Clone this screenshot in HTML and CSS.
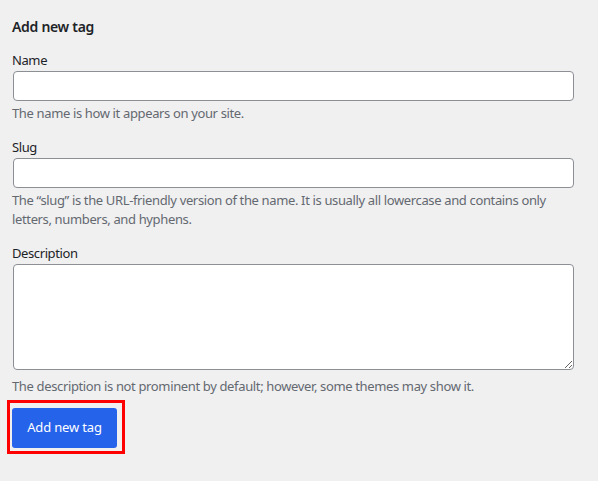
FILE: index.html
```html
<!DOCTYPE html>
<html lang="en">
<head>
<meta charset="utf-8">
<title>Add new tag</title>
<link rel="stylesheet" href="styles.css">
</head>
<body>
<div class="form-wrap">
  <h2 class="title">Add new tag</h2>
  <form class="tag-form">
    <div class="form-field">
      <label for="tag-name">Name</label>
      <input type="text" id="tag-name" class="text-input">
      <p class="description">The name is how it appears on your site.</p>
    </div>
    <div class="form-field">
      <label for="tag-slug">Slug</label>
      <input type="text" id="tag-slug" class="text-input">
      <p class="description">The “slug” is the URL-friendly version of the name. It is usually all lowercase and contains only letters, numbers, and hyphens.</p>
    </div>
    <div class="form-field">
      <label for="tag-description">Description</label>
      <textarea id="tag-description" class="text-area"></textarea>
      <p class="description">The description is not prominent by default; however, some themes may show it.</p>
    </div>
    <div class="submit">
      <button type="button" class="button-primary">Add new tag</button>
      <span class="highlight"></span>
    </div>
  </form>
</div>
</body>
</html>
```
FILE: styles.css
```css
html, body {
  margin: 0;
  padding: 0;
  background: #f0f0f1;
}
body {
  font-family: "Segoe UI", "Noto Sans", "Open Sans", sans-serif;
  font-size: 13px;
  line-height: 19.5px;
  color: #1d2327;
  width: 598px;
  height: 481px;
  overflow: hidden;
}
.form-wrap {
  padding: 16px 23px 0 12px;
}
.title {
  margin: 0 0 12px;
  font-size: 14px;
  font-weight: 600;
  line-height: 22px;
  letter-spacing: -0.3px;
}
.form-field {
  display: flex;
  flex-direction: column;
  align-items: stretch;
  margin-bottom: 13px;
}
.form-field label {
  display: block;
  line-height: 20px;
  margin-bottom: 1px;
  letter-spacing: -0.4px;
}
.text-input,
.text-area {
  display: block;
  box-sizing: border-box;
  margin: 0 1px;
  border: 1px solid #8c8f94;
  border-radius: 4px;
  background: #fff;
  font: inherit;
  color: #2c3338;
  padding: 0 8px;
}
.text-input {
  height: 30px;
}
.text-area {
  height: 106px;
  margin-bottom: 4px;
  resize: vertical;
}
.description {
  margin: 3px 0 0;
  color: #646970;
  line-height: 19.5px;
  letter-spacing: -0.36px;
}
.submit {
  position: relative;
  margin-top: -1px;
  width: 105px;
}
.button-primary {
  display: block;
  width: 105px;
  height: 40px;
  border: 0;
  border-radius: 3px;
  background: #2563eb;
  color: #fff;
  font: inherit;
  font-size: 13px;
  letter-spacing: -0.15px;
  padding: 0;
  cursor: pointer;
}
.highlight {
  position: absolute;
  left: -5px;
  top: -8px;
  width: 112px;
  height: 48px;
  border: 3px solid #ff0000;
  pointer-events: none;
}
```
